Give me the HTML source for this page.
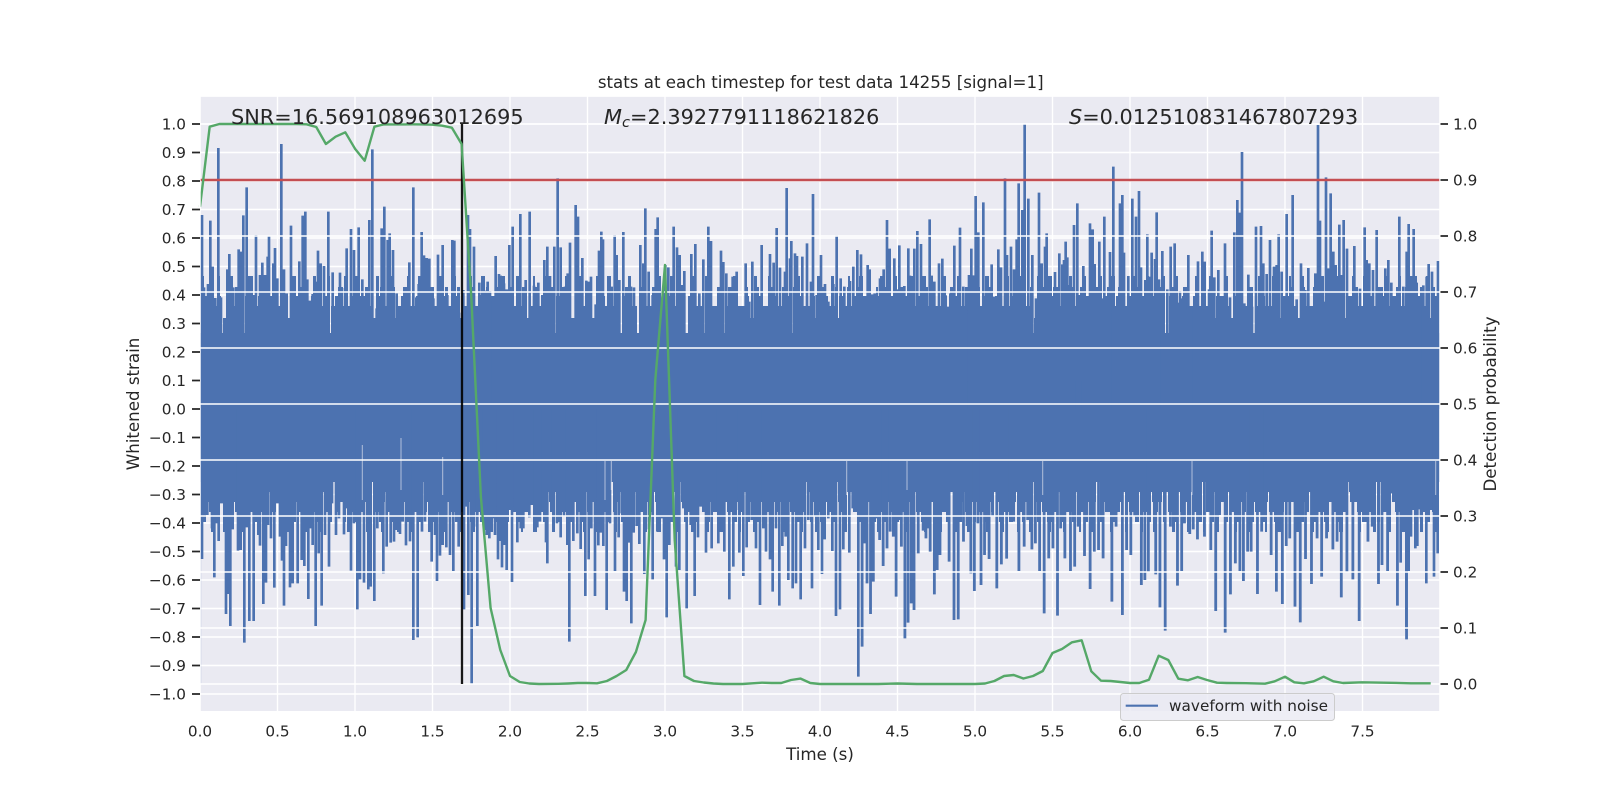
<!DOCTYPE html>
<html><head><meta charset="utf-8"><title>stats</title>
<style>html,body{margin:0;padding:0;background:#fff}svg{display:block}text{font-family:"DejaVu Sans",sans-serif;fill:#262626}</style></head>
<body>
<svg width="1600" height="800" viewBox="0 0 1600 800" xmlns="http://www.w3.org/2000/svg">
<rect width="1600" height="800" fill="#fff"/>
<rect x="200.7" y="96.7" width="1238.6" height="614.3" fill="#eaeaf2"/>
<!-- grid under waveform -->
<path stroke="#fff" stroke-width="1.4" fill="none" d="M277.5 96V712M355 96V712M432.5 96V712M510 96V712M587.5 96V712M665 96V712M742.5 96V712M820 96V712M897.5 96V712M975 96V712M1052.5 96V712M1130 96V712M1207.5 96V712M1285 96V712M1362.5 96V712M200 124H1440M200 152.5H1440M200 181H1440M200 209.5H1440M200 238H1440M200 266.5H1440M200 295H1440M200 323.5H1440M200 352H1440M200 380.5H1440M200 409H1440M200 437.5H1440M200 466H1440M200 494.5H1440M200 523H1440M200 551.5H1440M200 580H1440M200 608.5H1440M200 637H1440M200 665.5H1440M200 694H1440"/>
<!-- waveform -->
<rect x="200.7" y="333" width="1238.6" height="149" fill="#4c72b0"/>
<rect x="200" y="409" width="1.3" height="275" fill="#4c72b0" opacity=".2"/>
<g fill="none" stroke="#4c72b0">
<path stroke-width="59" stroke-dasharray="3 14 2 9 4 17 3 11" d="M201 305.5H1439"/>
<path stroke-width="48" stroke-dasharray="3 8 5 13 2 7 4 11 3 9" stroke-dashoffset="4" d="M201 311H1439"/>
<path stroke-width="39" stroke-dasharray="4 7 6 9 3 5 8 11 5 8" stroke-dashoffset="9" d="M201 315.5H1439"/>
<path stroke-width="29" stroke-dasharray="5 5 9 8 4 4 7 6 11 7" stroke-dashoffset="2" d="M201 320.5H1439"/>
<path stroke-width="17" stroke-dasharray="12 6 7 4 16 7 9 5 14 6" stroke-dashoffset="7" d="M201 326.5H1439"/>
<path stroke-width="54" stroke-dasharray="3 13 2 10 4 15 3 12" stroke-dashoffset="6" d="M201 505H1439"/>
<path stroke-width="44" stroke-dasharray="4 9 3 12 2 8 5 10 3 7" stroke-dashoffset="11" d="M201 500H1439"/>
<path stroke-width="34" stroke-dasharray="5 6 4 10 7 5 3 9 6 8" stroke-dashoffset="3" d="M201 495H1439"/>
<path stroke-width="24" stroke-dasharray="6 5 8 7 5 4 10 6 9 6" stroke-dashoffset="8" d="M201 490H1439"/>
<path stroke-width="14" stroke-dasharray="13 5 8 4 15 6 10 4 17 5" stroke-dashoffset="1" d="M201 485H1439"/>
</g>
<g fill="none" stroke="#4c72b0" stroke-width="8">
<g transform="translate(120 60) scale(.33333)"><path d="M246 465V1047M252 682V1047M258 770V1047M264 672V1047M271 482V1047M278 620V1047M286 714V1047M295 264V1047M303 712V1047M322 628V1047M328 582V1047M340 682V1047M356 568V1047M362 575V1047M370 466V1047M380 382V1047M388 648V1047M400 705V1047M408 525V1047M420 645V1047M427 608V1047M435 645V1047M443 590V1047M447 528V1047M460 610V1047M465 564V1047M472 655V1047M484 252V1047M492 628V1047M500 700V1047M513 497V1047M520 700V1047M538 604V1047M548 467V1047M556 455V1047M562 658V1047M570 722V1047M578 702V1047M586 665V1047M594 572V1047M602 610V1047M612 618V1047M625 455V1047M638 637V1047M650 730V1047M660 638V1047M666 684V1047M680 565V1047M693 507V1047M702 570V1047M716 502V1047M727 658V1047M737 720V1047M748 480V1047M757 268V1047M770 745V1047M785 505V1047M793 440V1047M803 540V1047M809 520V1047M819 570V1047M830 700V1047M852 710V1047M868 607V1047M880 382V1047M889 712V1047M896 672V1047M905 516V1047M912 586V1047M920 594V1047M928 596V1047M940 715V1047M954 584V1047M968 555V1047M982 705V1047M997 540V1047M1003 542V1047M1017 758V1047"/></g>
<g transform="translate(460 160) scale(.33333)"><path d="M10 390V747M24 165V747M30 207V747M42 260V747M58 368V747M64 405V747M76 392V747M83 365V747M90 393V747M100 422V747M107 288V747M117 342V747M122 347V747M132 370V747M140 388V747M148 255V747M158 200V747M172 380V747M181 162V747M197 360V747M209 155V747M222 377V747M235 368V747M247 405V747M253 300V747M262 260V747M270 348V747M283 260V747M293 55V747M302 262V747M315 380V747M323 340V747M330 248V747M347 135V747M354 170V747M367 294V747M379 362V747M387 365V747M393 350V747M407 433V747M417 272V747M424 215V747M429 238V747M440 483V747M455 380V747M464 225V747M470 285V747M478 360V747M490 216V747M502 400V747M513 380V747M522 382V747M541 255V747M550 310V747M556 145V747M566 335V747M578 405V747M587 207V747M593 172V747M606 420V747M616 315V747M625 322V747M641 200V747M651 262V747M659 285V747M666 375V747M673 333V747M690 460V747M694 282V747M706 252V747M718 400V747M730 298V747M745 200V747M753 243V747M765 455V747M783 272V747M790 306V747M799 340V747M808 500V747M818 350V747M830 335V747M845 445V747M857 310V747M868 425V747M877 305V747M886 400V747M896 472V747M905 255V747M915 490V747M930 282V747M941 308V747M950 204V747M960 323V747M975 335V747M980 84V747M990 295V747M994 243V747M1005 280V747M1011 288V747M1027 290V747M1041 250V747M1048 460V747M1053 365V747M1059 102V747M1070 405V747M1083 285V747M1095 372V747M1105 425V747M1120 372V747M1130 226V747M1142 355V747M1153 380V747M1170 363V747M1180 320V747M1192 270V747"/></g>
<g transform="translate(860 160) scale(.33333)"><path d="M3 283V747M10 425V747M15 470V747M23 315V747M29 328V747M36 403V747M44 400V747M53 428V747M60 355V747M66 348V747M71 328V747M81 180V747M89 266V747M96 425V747M103 295V747M110 388V747M118 256V747M127 435V747M133 378V747M145 265V747M150 347V747M156 460V747M163 266V747M172 213V747M183 252V747M188 422V747M198 445V747M209 178V747M215 347V747M223 365V747M230 445V747M237 310V747M247 296V747M256 405V747M265 440V747M271 400V747M283 257V747M290 430V747M300 203V747M310 380V747M318 445V747M327 345V747M334 266V747M340 346V747M347 108V747M355 217V747M370 127V747M376 435V747M382 452V747M395 313V747M403 410V747M415 268V747M423 322V747M435 55V747M441 285V747M453 260V747M462 328V747M470 238V747M476 70V747M487 150V747M494 -108V747M505 116V747M517 285V747M528 415V747M537 98V747M545 310V747M555 260V747M560 220V747M566 385V747M585 336V747M598 280V747M607 313V747M612 300V747M617 245V747M622 292V747M630 375V747M642 195V747M652 130V747M660 405V747M670 318V747M680 458V747M690 190V747M698 208V747M704 312V747M718 245V747M726 415V747M733 170V747M750 276V747M760 20V747M771 478V747M780 130V747M787 105V747M792 278V747M805 348V747M817 116V747M828 170V747M837 93V747M843 322V747M856 360V747M862 223V747M868 350V747M875 278V747M885 297V747M890 157V747M897 358V747M907 273V747M922 388V747M932 260V747M944 250V747M952 428V747M960 393V747M966 415V747M975 430V747M985 285V747M993 450V747M1003 415V747M1014 304V747M1027 275V747M1034 305V747M1047 388V747M1055 212V747M1063 352V747M1075 330V747"/></g>
<g transform="translate(1200 90) scale(.33333)"><path d="M62 670V957M75 460V957M82 705V957M90 622V957M103 427V957M112 330V957M120 368V957M126 186V957M133 640V957M145 554V957M156 650V957M168 410V957M183 408V957M190 520V957M200 552V957M210 450V957M222 530V957M230 525V957M236 433V957M245 545V957M253 620V957M260 372V957M268 700V957M278 315V957M290 628V957M303 520V957M316 600V957M325 534V957M334 720V957M346 550V957M354 105V957M360 392V957M370 635V957M378 262V957M385 535V957M392 310V957M400 485V957M407 525V957M418 404V957M424 555V957M431 390V957M441 476V957M450 715V957M463 468V957M470 665V957M480 596V957M494 412V957M500 510V957M508 520V957M519 540V957M530 420V957M538 680V957M545 710V957M556 535V957M565 510V957M574 578V957M584 680V957M590 628V957M598 380V957M610 590V957M620 485V957M626 402V957M634 558V957M641 417V957M650 578V957M660 625V957M670 586V957M680 560V957M686 522V957M696 545V957M705 660V957M714 513V957"/></g>
<g transform="translate(120 440) scale(.33333)"><path d="M246 357V-93M254 180V-93M262 225V-93M268 145V-93M276 265V-93M283 412V-93M290 250V-93M296 303V-93M304 190V-93M311 190V-93M318 522V-93M324 462V-93M331 558V-93M338 268V-93M345 180V-93M354 332V-93M362 330V-93M373 608V-93M381 262V-93M388 543V-93M396 180V-93M401 543V-93M407 150V-93M415 285V-93M420 317V-93M430 492V-93M438 428V-93M444 255V-93M453 295V-93M463 443V-93M472 190V-93M480 290V-93M486 362V-93M492 497V-93M498 318V-93M510 442V-93M518 430V-93M523 240V-93M533 430V-93M545 360V-93M553 378V-93M565 477V-93M572 265V-93M578 315V-93M587 558V-93M596 340V-93M605 497V-93M615 285V-93M627 380V-93M636 190V-93M648 285V-93M657 235V-93M672 283V-93M680 205V-93M693 392V-93M702 250V-93M712 508V-93M720 418V-93M732 428V-93M745 448V-93M752 440V-93M763 483V-93M772 265V-93M790 400V-93M800 320V-93M812 308V-93M822 305V-93M830 270V-93M840 282V-93M848 245V-93M858 316V-93M870 304V-93M880 600V-93M893 592V-93M906 275V-93M915 245V-93M935 365V-93M945 285V-93M951 423V-93M960 347V-93M968 315V-93M979 322V-93M990 345V-93M1000 393V-93M1016 320V-93"/></g>
<g transform="translate(460 460) scale(.33333)"><path d="M12 448V-153M18 140V-153M25 405V-153M35 672V-153M42 200V-153M52 498V-153M63 70V-153M73 210V-153M80 225V-153M88 235V-153M98 175V-153M105 225V-153M114 298V-153M120 243V-153M126 322V-153M132 255V-153M140 330V-153M150 150V-153M156 366V-153M165 140V-153M172 247V-153M182 205V-153M190 205V-153M200 115V-153M208 172V-153M216 135V-153M225 145V-153M232 202V-153M240 185V-153M250 150V-153M258 247V-153M262 310V-153M270 90V-153M280 145V-153M291 190V-153M302 232V-153M312 170V-153M322 255V-153M328 545V-153M340 243V-153M352 220V-153M362 267V-153M376 408V-153M386 298V-153M394 205V-153M405 408V-153M415 256V-153M423 218V-153M430 258V-153M440 450V-153M450 190V-153M465 333V-153M476 232V-153M485 160V-153M492 395V-153M500 423V-153M507 248V-153M514 490V-153M521 218V-153M530 198V-153M538 252V-153M546 150V-153M553 342V-153M567 208V-153M578 358V-153M592 215V-153M604 175V-153M612 298V-153M620 472V-153M628 255V-153M635 175V-153M648 320V-153M658 330V-153M670 145V-153M680 445V-153M692 195V-153M704 408V-153M714 232V-153M722 140V-153M738 278V-153M745 105V-153M755 265V-153M765 140V-153M775 250V-153M785 120V-153M793 275V-153M808 418V-153M820 320V-153M828 150V-153M838 278V-153M850 348V-153M860 262V-153M875 180V-153M888 265V-153M900 435V-153M910 205V-153M918 275V-153M930 298V-153M938 395V-153M948 205V-153M958 437V-153M967 258V-153M977 230V-153M985 360V-153M998 385V-153M1008 370V-153M1022 418V-153M1035 265V-153M1045 180V-153M1056 385V-153M1066 170V-153M1075 270V-153M1086 342V-153M1094 238V-153M1105 175V-153M1117 273V-153M1128 468V-153M1140 448V-153M1150 268V-153M1168 278V-153M1178 145V-153M1195 650V-153"/></g>
<g transform="translate(860 460) scale(.3508 .33333)"><path d="M6 560V-153M12 250V-153M20 370V-153M30 462V-153M38 365V-153M46 175V-153M56 240V-153M66 318V-153M77 265V-153M86 215V-153M95 230V-153M103 410V-153M110 180V-153M118 260V-153M128 535V-153M137 488V-153M146 430V-153M154 450V-153M166 280V-153M180 212V-153M188 235V-153M195 205V-153M200 275V-153M212 403V-153M220 330V-153M228 285V-153M240 150V-153M254 305V-153M268 480V-153M280 478V-153M295 245V-153M305 198V-153M316 340V-153M326 393V-153M336 190V-153M345 375V-153M355 285V-153M368 297V-153M378 170V-153M390 385V-153M403 313V-153M418 296V-153M428 170V-153M438 185V-153M453 333V-153M468 260V-153M478 180V-153M490 268V-153M500 250V-153M512 333V-153M525 460V-153M538 295V-153M550 265V-153M563 467V-153M572 205V-153M584 295V-153M600 333V-153M612 320V-153M622 200V-153M640 288V-153M656 387V-153M668 275V-153M680 270V-153M693 295V-153M705 100V-153M718 425V-153M730 200V-153M748 465V-153M760 270V-153M772 285V-153M783 170V-153M802 375V-153M812 360V-153M822 335V-153M843 343V-153M855 442V-153M870 512V-153M885 200V-153M905 377V-153M917 333V-153M925 190V-153M940 222V-153M950 208V-153M962 238V-153M970 185V-153M982 230V-153M995 100V-153M1000 270V-153M1014 453V-153M1025 165V-153M1041 518V-153M1056 403V-153M1070 310V-153M1083 333V-153M1093 363V-153M1105 275V-153M1115 275V-153M1133 402V-153M1145 215V-153M1155 140V-153M1172 285V-153M1187 395V-153M1204 432V-153M1215 258V-153M1225 235V-153M1240 440V-153M1255 487V-153M1270 297V-153M1287 372V-153M1303 235V-153M1316 350V-153M1330 235V-153M1348 268V-153M1360 245V-153M1372 412V-153M1388 335V-153M1405 358V-153M1423 483V-153M1437 180V-153M1448 245V-153M1460 200V-153M1478 372V-153M1488 315V-153M1504 333V-153M1516 100V-153M1532 437V-153M1544 145V-153M1558 538V-153"/></g>
<g transform="translate(1400 460) scale(.33333)"><path d="M2 308V-153M8 145V-153M19 510V-153M26 333V-153M33 230V-153M38 150V-153M46 265V-153M52 258V-153M58 148V-153M63 175V-153M70 130V-153M79 370V-153M85 105V-153M93 150V-153M102 350V-153M110 120V-153M113 280V-153"/></g>
</g>
<path stroke="#eaeaf2" stroke-width="1" opacity=".65" fill="none" d="M362.3 445V500M401 438V490M442.7 457V495M605 461V500M611.3 461V490M846.7 461V495M907 461V490M1042.7 461V495M1192 461V495M1435.7 461V495"/>
<!-- right-axis grid on top -->
<path stroke="#fff" stroke-width="1.4" fill="none" d="M200 124H1440M200 180H1440M200 236H1440M200 292H1440M200 348H1440M200 404H1440M200 460H1440M200 516H1440M200 572H1440M200 628H1440M200 684H1440"/>
<path stroke="#c44e52" stroke-width="2.4" fill="none" d="M200 180H1440"/>
<path stroke="#000" stroke-width="2.3" fill="none" opacity=".9" d="M462 124V684"/>
<polyline fill="none" stroke="#55a868" stroke-width="2.4" stroke-linejoin="round" points="200,206.7 209.7,126.7 219.4,124 229,124 238.8,124 248.4,124 258,124 267.8,124 277.5,124 287.2,124 296.9,124 306.6,124.3 316.25,127 325.9,144 335.6,136.7 345.3,132.3 355,148.7 364.7,160.7 374.4,126.7 384,124.3 393.8,124.4 403.5,124.4 413.2,124.3 422.8,124.4 432.5,124.7 442.2,125.7 451.9,127.7 461.6,144 471.25,296 480.9,497 490.6,608 500.3,650 510,676 519.7,682 529.4,683.5 539,684 558.5,683.8 568,683.5 577.8,683 587.5,683 597,683.3 606.9,681 616.6,676 626.25,670 635.9,652 645.6,620 655.3,380 665,265 674.7,540 684.4,676 694,681 703.8,682.5 713.5,683.5 723,684 742.5,684 752.2,683.3 762,682.7 771.6,683 781.3,683 791,680 800.6,678.6 810.3,683 820,684 878,684 897.5,683.5 917,684 975,684 985,683.5 994.4,681 1004.1,676 1013.75,675 1023.4,678.5 1033.1,676 1042.8,671 1052.5,653 1062,649 1072,642.3 1081.7,640.3 1091.3,671.3 1101,680.7 1110.7,681 1120.3,682 1130,683 1139.3,683 1149,679.7 1158.7,655.7 1168.3,660 1178.3,678.7 1188,680.3 1197.7,677 1207,680 1217,682.7 1226.5,683 1246,683.2 1265,683.7 1274.7,681.3 1285,676.7 1294.3,682.3 1304,683.3 1313.7,681.3 1323.7,676.7 1333.3,681.3 1343,683 1362,682.3 1391,682.8 1411,683.3 1430.7,683.3"/>
<!-- trim to axes -->
<path fill="#fff" d="M199 95H1441V96.7H199ZM199 711H1441V713H199ZM199 95H200.7V713H199ZM1439.3 95H1441V713H1439.3Z"/>
<!-- legend -->
<rect x="1120.5" y="693.5" width="214" height="27" rx="3" fill="#eaeaf2" fill-opacity=".8" stroke="#cccccc" stroke-width="1"/>
<path stroke="#4c72b0" stroke-width="2.1" fill="none" d="M1125.7 705.7H1158"/>
<text x="1169" y="711" font-size="15.28" textLength="159" lengthAdjust="spacing">waveform with noise</text>
<!-- ticks -->
<path stroke="#262626" stroke-width="1.7" fill="none" d="M192 124H200M192 152.5H200M192 181H200M192 209.5H200M192 238H200M192 266.5H200M192 295H200M192 323.5H200M192 352H200M192 380.5H200M192 409H200M192 437.5H200M192 466H200M192 494.5H200M192 523H200M192 551.5H200M192 580H200M192 608.5H200M192 637H200M192 665.5H200M192 694H200M1440.5 124H1448M1440.5 180H1448M1440.5 236H1448M1440.5 292H1448M1440.5 348H1448M1440.5 404H1448M1440.5 460H1448M1440.5 516H1448M1440.5 572H1448M1440.5 628H1448M1440.5 684H1448"/>
<g font-size="15.28" text-anchor="end">
<text x="186" y="129.5">1.0</text><text x="186" y="158">0.9</text><text x="186" y="186.5">0.8</text><text x="186" y="215">0.7</text><text x="186" y="243.5">0.6</text><text x="186" y="272">0.5</text><text x="186" y="300.5">0.4</text><text x="186" y="329">0.3</text><text x="186" y="357.5">0.2</text><text x="186" y="386">0.1</text><text x="186" y="414.5">0.0</text><text x="186" y="443">−0.1</text><text x="186" y="471.5">−0.2</text><text x="186" y="500">−0.3</text><text x="186" y="528.5">−0.4</text><text x="186" y="557">−0.5</text><text x="186" y="585.5">−0.6</text><text x="186" y="614">−0.7</text><text x="186" y="642.5">−0.8</text><text x="186" y="671">−0.9</text><text x="186" y="699.5">−1.0</text>
</g>
<g font-size="15.28">
<text x="1453" y="129.5">1.0</text><text x="1453" y="185.5">0.9</text><text x="1453" y="241.5">0.8</text><text x="1453" y="297.5">0.7</text><text x="1453" y="353.5">0.6</text><text x="1453" y="409.5">0.5</text><text x="1453" y="465.5">0.4</text><text x="1453" y="521.5">0.3</text><text x="1453" y="577.5">0.2</text><text x="1453" y="633.5">0.1</text><text x="1453" y="689.5">0.0</text>
</g>
<g font-size="15.28" text-anchor="middle">
<text x="200" y="736.5">0.0</text><text x="277.5" y="736.5">0.5</text><text x="355" y="736.5">1.0</text><text x="432.5" y="736.5">1.5</text><text x="510" y="736.5">2.0</text><text x="587.5" y="736.5">2.5</text><text x="665" y="736.5">3.0</text><text x="742.5" y="736.5">3.5</text><text x="820" y="736.5">4.0</text><text x="897.5" y="736.5">4.5</text><text x="975" y="736.5">5.0</text><text x="1052.5" y="736.5">5.5</text><text x="1130" y="736.5">6.0</text><text x="1207.5" y="736.5">6.5</text><text x="1285" y="736.5">7.0</text><text x="1362.5" y="736.5">7.5</text>
</g>
<!-- labels -->
<text x="820.7" y="88.2" font-size="16.67" text-anchor="middle">stats at each timestep for test data 14255 [signal=1]</text>
<text x="820" y="760" font-size="16.67" text-anchor="middle">Time (s)</text>
<text transform="translate(139 404) rotate(-90)" font-size="16.67" text-anchor="middle">Whitened strain</text>
<text transform="translate(1496 404) rotate(-90)" font-size="16.67" text-anchor="middle">Detection probability</text>
<!-- annotations -->
<text x="231" y="124" font-size="20.83">SNR=16.569108963012695</text>
<text x="604" y="124" font-size="20.83"><tspan font-style="italic">M</tspan><tspan font-style="italic" font-size="14.6" dy="3">c</tspan><tspan dy="-3">=2.3927791118621826</tspan></text>
<text x="1069" y="124" font-size="20.83"><tspan font-style="italic">S</tspan>=0.012510831467807293</text>
</svg>
</body></html>
